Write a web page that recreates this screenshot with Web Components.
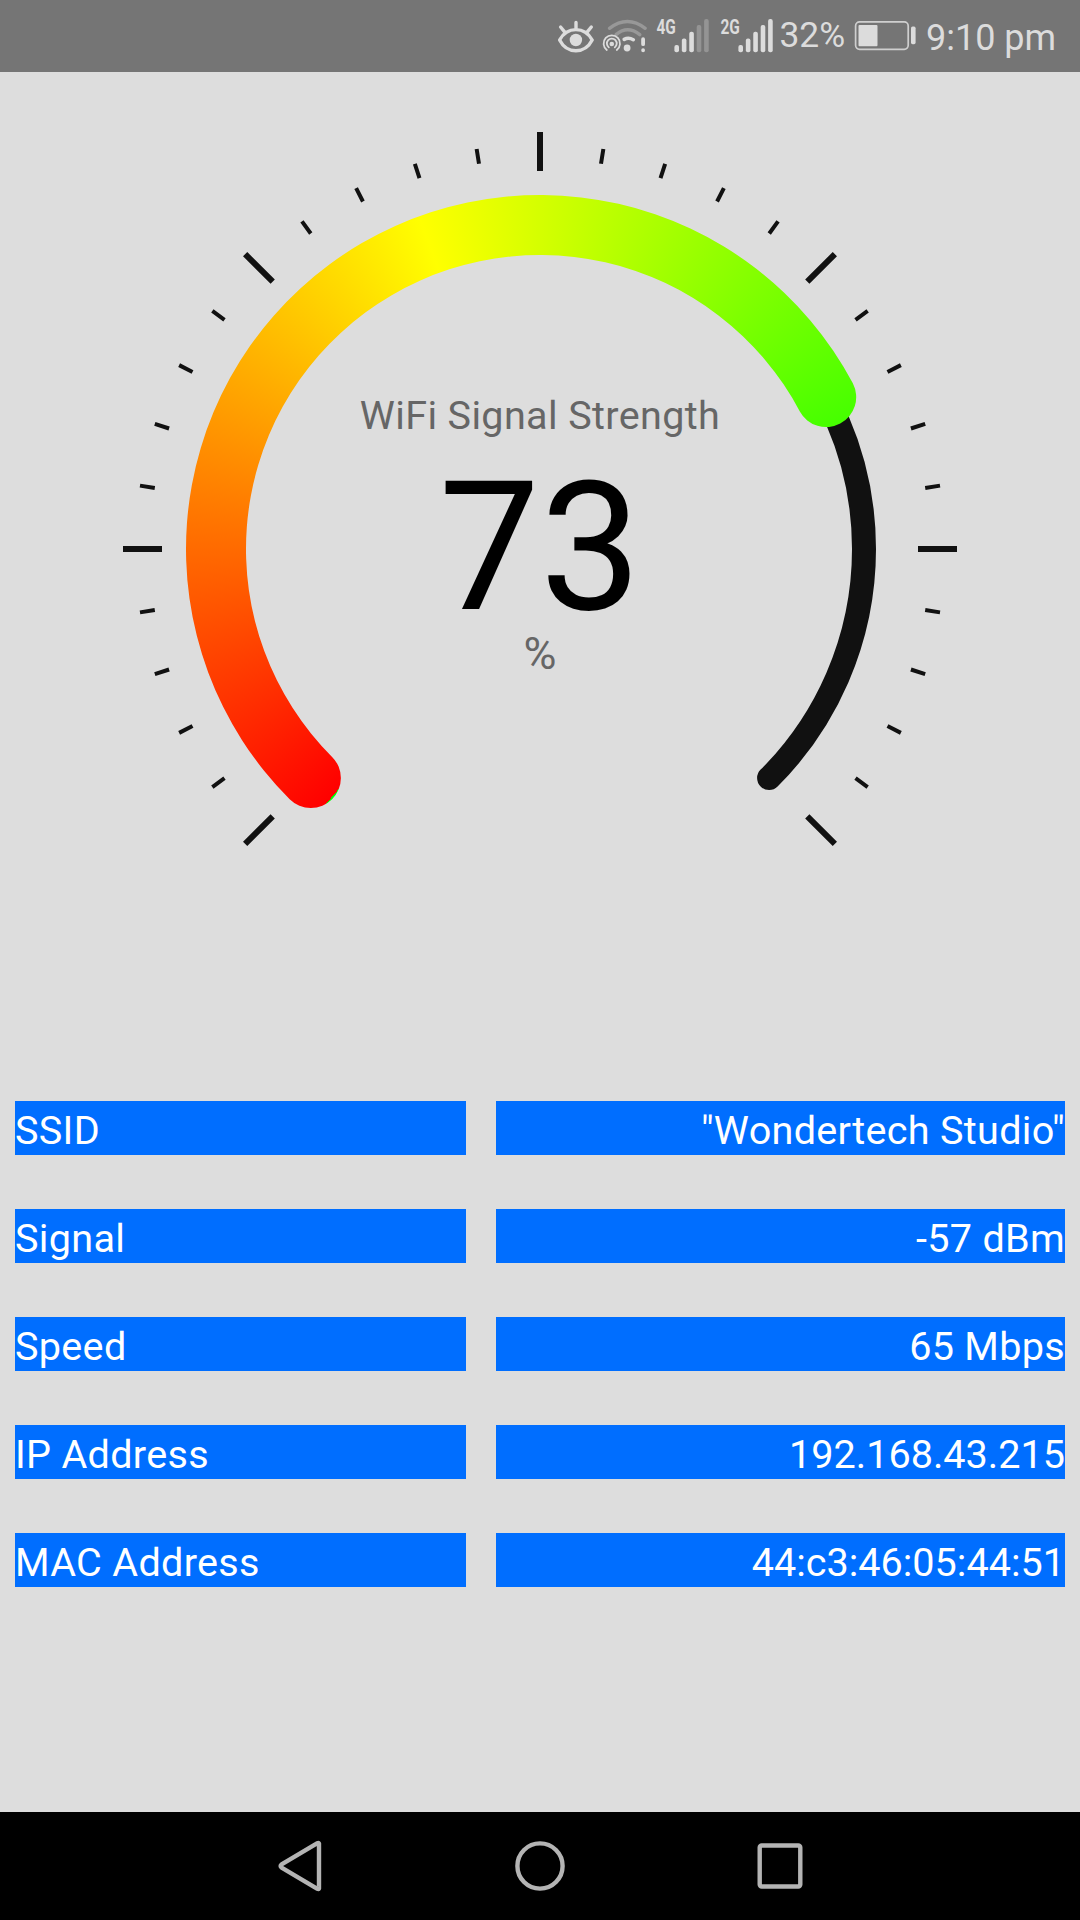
<!DOCTYPE html>
<html lang="en">
<head>
<meta charset="utf-8">
<title>WiFi Signal Strength</title>
<style>
    html, body { margin: 0; height: 100%; }
    body {
        background: #ddd;
        font-family: Roboto, "Noto Sans", sans-serif;
    }
</style>
</head>
<body>
<app-screen>
    <status-bar slot="status" battery="32" time="9:10 pm"></status-bar>
    <signal-gauge value="73" unit="%">WiFi Signal Strength</signal-gauge>
    <info-table>
        <info-row label="SSID">"Wondertech Studio"</info-row>
        <info-row label="Signal">-57 dBm</info-row>
        <info-row label="Speed">65 Mbps</info-row>
        <info-row label="IP Address" numeric>192.168.43.215</info-row>
        <info-row label="MAC Address" numeric>44:c3:46:05:44:51</info-row>
    </info-table>
    <nav-bar slot="nav"></nav-bar>
</app-screen>

<script>
// --- Layout ---

class AppScreen extends HTMLElement {
    constructor() {
        super();
        this.attachShadow({ mode: 'open' });
        this.shadowRoot.innerHTML = `
            <style>
                :host {
                    display: grid;
                    grid-template-rows: 72px 1fr 108px;
                    width: 1080px;
                    height: 1920px;
                    overflow: hidden;
                }
                main { display: flex; flex-direction: column; }
            </style>
            <slot name="status"></slot>
            <main><slot></slot></main>
            <slot name="nav"></slot>
        `;
    }
}

// --- Status bar ---

class SignalBars extends HTMLElement {
    constructor() {
        super();
        this.attachShadow({ mode: 'open' });
    }

    connectedCallback() {
        const level = Number(this.getAttribute('level'));
        const tops = [45, 38.5, 31.7, 25, 19];
        const bars = tops.map((y, i) => `
            <rect x="${22.4 + i * 7.43}" y="${y}" width="4.6" height="${52.3 - y}" rx="2"
                fill="${i < level ? '#dcdcdc' : '#949494'}"/>`).join('');

        this.shadowRoot.innerHTML = `
            <style>
                :host { display: block; }
                svg { display: block; }
                text { font: 700 20.5px Roboto, sans-serif; fill: #dcdcdc; }
            </style>
            <svg width="64" height="72" viewBox="0 0 64 72">
                <text x="4.4" y="33.6" textLength="19.4" lengthAdjust="spacingAndGlyphs">${this.getAttribute('network')}</text>
                ${bars}
            </svg>
        `;
    }
}

class StatusBar extends HTMLElement {
    constructor() {
        super();
        this.attachShadow({ mode: 'open' });
    }

    connectedCallback() {
        const battery = this.getAttribute('battery') || '0';
        const time = this.getAttribute('time') || '';

        this.shadowRoot.innerHTML = `
            <style>
                :host {
                    display: flex;
                    justify-content: flex-end;
                    height: 72px;
                    padding-right: 23px;
                    box-sizing: border-box;
                    background: #757575;
                    color: #dcdcdc;
                    font-size: 36px;
                    white-space: nowrap;
                }
                svg { display: block; flex: none; }
                .battery { width: 71px; font-size: 35.4px; line-height: 71px; text-indent: -0.6px; }
                .time { width: 131px; line-height: 77px; }
            </style>
            <svg width="49" height="72" viewBox="552 0 49 72" fill="none" stroke="#dcdcdc" stroke-width="3.4" stroke-linecap="round">
                <path d="M559.6 40C563.5 32.8 569.5 29.6 575.9 29.6S588.3 32.8 592.2 40C588.3 47.6 582.3 50.7 575.9 50.7S563.5 47.6 559.6 40Z" stroke-linejoin="round"/>
                <path d="M576 22.5V28M560.6 27L565 32.3M591.3 27L586.9 32.3"/>
                <circle cx="575.9" cy="40" r="6.2" fill="#dcdcdc" stroke="none"/>
            </svg>
            <svg width="51" height="72" viewBox="601 0 51 72" fill="none" stroke-linecap="round">
                <path d="M609.5 28.3Q627.4 14.6 645.2 28.3M616 34.6Q627.6 25 639.8 34.6" stroke="#989898" stroke-width="3.4"/>
                <g stroke="#dcdcdc" stroke-width="1.8">
                    <path d="M606.8 50A8.2 8.2 0 1 1 616.8 50M608.8 47.4A4.9 4.9 0 1 1 614.8 47.4"/>
                    <path d="M624.2 39.4Q628.5 37 633.3 39.7" stroke-width="3.6"/>
                    <path d="M643.1 39.2V44.2M643.1 50.2V50.3" stroke-width="3.8"/>
                </g>
                <circle cx="611.8" cy="44" r="2.3" fill="#dcdcdc"/>
                <circle cx="627.1" cy="48" r="3.4" fill="#dcdcdc"/>
            </svg>
            <signal-bars network="4G" level="3"></signal-bars>
            <signal-bars network="2G" level="5"></signal-bars>
            <span class="battery">${battery}%</span>
            <svg width="75" height="72" viewBox="851 0 75 72" fill="none">
                <rect x="855.6" y="21.9" width="52.6" height="27.4" rx="4" stroke="#cfcfcf" stroke-width="1.7"/>
                <rect x="858.5" y="25" width="19" height="21.2" rx="1" fill="#dcdcdc"/>
                <rect x="911" y="26.6" width="4.6" height="17.6" rx="1.6" fill="#dcdcdc"/>
            </svg>
            <span class="time">${time}</span>
        `;
    }
}

// --- Gauge ---

const CX = 540;
const CY = 477;
const RADIUS = 324;
const START = 135;
const SWEEP = 270;

function polar(r, deg) {
    const a = deg * Math.PI / 180;
    return `${(CX + r * Math.cos(a)).toFixed(2)} ${(CY + r * Math.sin(a)).toFixed(2)}`;
}

class SignalGauge extends HTMLElement {
    constructor() {
        super();
        this.attachShadow({ mode: 'open' });
    }

    connectedCallback() {
        this.render();
    }

    static get observedAttributes() {
        return ['value', 'unit'];
    }

    attributeChangedCallback() {
        this.render();
    }

    // outline of the thick bar with round caps at both ends
    barPath(end) {
        const half = 30;
        const outer = RADIUS + half;
        const inner = RADIUS - half;
        const large = end - START > 180 ? 1 : 0;
        return `M${polar(outer, START)}A${outer} ${outer} 0 ${large} 1 ${polar(outer, end)}`
            + `A${half} ${half} 0 0 1 ${polar(inner, end)}`
            + `A${inner} ${inner} 0 ${large} 0 ${polar(inner, START)}`
            + `A${half} ${half} 0 0 1 ${polar(outer, START)}Z`;
    }

    ticks() {
        let major = '';
        let minor = '';
        for (let i = 0; i <= 30; i++) {
            const deg = START + i * 9;
            if (i % 5 === 0) {
                major += `M${polar(378, deg)}L${polar(417, deg)}`;
            } else {
                minor += `M${polar(390, deg)}L${polar(405, deg)}`;
            }
        }
        return `<path d="${major}" stroke-width="6"/><path d="${minor}" stroke-width="4"/>`;
    }

    render() {
        const value = Number(this.getAttribute('value')) || 0;
        const unit = this.getAttribute('unit') || '';
        const end = START + SWEEP * value / 100;

        this.shadowRoot.innerHTML = `
            <style>
                :host {
                    display: grid;
                    width: 1080px;
                    height: 1029px;
                }
                svg, .bar, .readout { grid-area: 1 / 1; }
                svg { display: block; }
                .bar {
                    /* the sweep begins 5deg before the bar, under its cap */
                    background: conic-gradient(from 220deg at ${CX}px ${CY}px, #f00, #ff0 120deg, #0f0 240deg, #0f0);
                    clip-path: path('${this.barPath(end)}');
                }
                .readout {
                    display: flex;
                    flex-direction: column;
                    align-items: center;
                    padding-top: 320px;
                    color: #666;
                }
                .title { font-size: 39.5px; line-height: 48px; letter-spacing: 0.38px; }
                .value { margin-top: 26px; font-size: 180px; line-height: 164px; color: #000; }
                .unit { font-size: 45px; line-height: 48px; }
            </style>
            <svg width="1080" height="1029" viewBox="0 0 1080 1029" fill="none" stroke="#111">
                ${this.ticks()}
                <path d="M${polar(RADIUS, START)}A${RADIUS} ${RADIUS} 0 1 1 ${polar(RADIUS, START + SWEEP)}"
                    stroke-width="24" stroke-linecap="round"/>
            </svg>
            <div class="bar"></div>
            <div class="readout">
                <span class="title"><slot></slot></span>
                <span class="value">${value}</span>
                <span class="unit">${unit}</span>
            </div>
        `;
    }
}

// --- Connection details ---

class InfoTable extends HTMLElement {
    constructor() {
        super();
        this.attachShadow({ mode: 'open' });
        this.shadowRoot.innerHTML = `
            <style>
                :host {
                    display: flex;
                    flex-direction: column;
                    gap: 54px;
                    padding: 0 15px;
                }
            </style>
            <slot></slot>
        `;
    }
}

class InfoRow extends HTMLElement {
    constructor() {
        super();
        this.attachShadow({ mode: 'open' });
    }

    connectedCallback() {
        this.shadowRoot.innerHTML = `
            <style>
                :host {
                    display: grid;
                    grid-template-columns: 451px 1fr;
                    gap: 30px;
                    height: 54px;
                    font-size: 39.6px;
                    line-height: 60px;
                    letter-spacing: 0.3px;
                    color: #fff;
                    white-space: nowrap;
                }
                div { height: 54px; background: #006eff; }
                .value { text-align: right; }
                :host([numeric]) .value { letter-spacing: 0; }
            </style>
            <div>${this.getAttribute('label')}</div>
            <div class="value"><slot></slot></div>
        `;
    }
}

// --- Navigation bar ---

class NavBar extends HTMLElement {
    constructor() {
        super();
        this.attachShadow({ mode: 'open' });
        this.shadowRoot.innerHTML = `
            <style>
                :host {
                    display: flex;
                    justify-content: center;
                    align-items: center;
                    gap: 180px;
                    height: 108px;
                    background: #000;
                }
                svg { display: block; }
            </style>
            <svg width="60" height="60" viewBox="0 0 60 60" fill="none" stroke="#b4b4b4" stroke-width="4.4" stroke-linejoin="round">
                <path d="M49 7.4V52.6Q48.6 53.4 47.4 52.8L11.6 31.6Q9.6 30 11.6 28.4L47.4 7.2Q48.6 6.6 49 7.4Z"/>
            </svg>
            <svg width="60" height="60" viewBox="0 0 60 60" fill="none" stroke="#b4b4b4" stroke-width="4.4">
                <circle cx="30" cy="30" r="22.6"/>
            </svg>
            <svg width="60" height="60" viewBox="0 0 60 60" fill="none" stroke="#b4b4b4" stroke-width="4.4">
                <rect x="9.7" y="9.5" width="40.6" height="41" rx="2"/>
            </svg>
        `;
    }
}

customElements.define('app-screen', AppScreen);
customElements.define('signal-bars', SignalBars);
customElements.define('status-bar', StatusBar);
customElements.define('signal-gauge', SignalGauge);
customElements.define('info-table', InfoTable);
customElements.define('info-row', InfoRow);
customElements.define('nav-bar', NavBar);
</script>
</body>
</html>
